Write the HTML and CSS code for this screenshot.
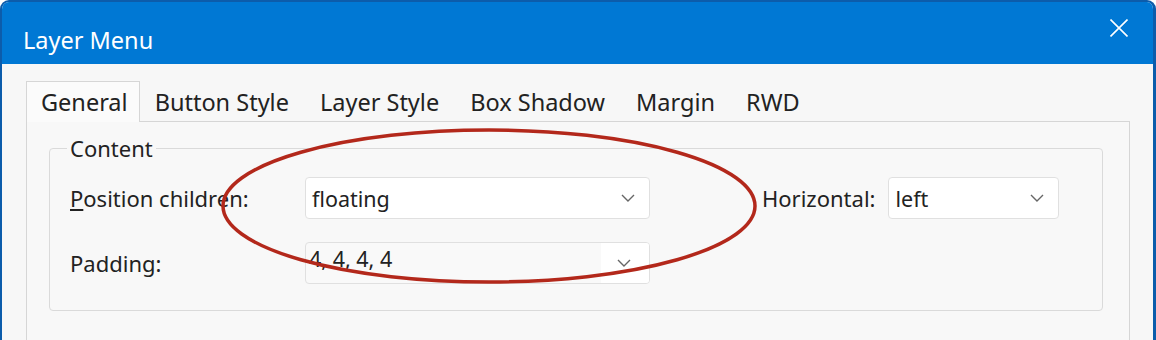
FILE: index.html
```html
<!DOCTYPE html>
<html lang="en">
<head>
    <meta charset="UTF-8">
    <meta name="viewport" content="width=device-width, initial-scale=1.0">
    <title>Layer Menu</title>
    <link rel="stylesheet" href="styles.css">
</head>
<body>
    <div class="window">
        <header class="titlebar">
            <span class="title">Layer Menu</span>
            <svg class="close" width="18" height="18" viewBox="0 0 18 18">
                <path d="M0.5 0.5 L17.5 17.5 M17.5 0.5 L0.5 17.5" stroke="#fff" stroke-width="1.6" fill="none"/>
            </svg>
        </header>
        <main class="content">
            <div class="tabs">
                <div class="tab active">General</div>
                <div class="tab">Button Style</div>
                <div class="tab">Layer Style</div>
                <div class="tab">Box Shadow</div>
                <div class="tab">Margin</div>
                <div class="tab">RWD</div>
            </div>
            <section class="panel">
                <fieldset class="group">
                    <legend>Content</legend>
                    <div class="row">
                        <label class="label"><u>P</u>osition children:</label>
                        <div class="combo wide">
                            <span>floating</span>
                            <svg class="chev" width="14" height="8" viewBox="0 0 14 8"><path d="M1 1 L7 7 L13 1" stroke="#666" stroke-width="1.4" fill="none"/></svg>
                        </div>
                        <label class="label side">Horizontal:</label>
                        <div class="combo narrow">
                            <span>left</span>
                            <svg class="chev" width="14" height="8" viewBox="0 0 14 8"><path d="M1 1 L7 7 L13 1" stroke="#666" stroke-width="1.4" fill="none"/></svg>
                        </div>
                    </div>
                    <div class="row">
                        <label class="label">Padding:</label>
                        <div class="combo wide editable">
                            <span>4, 4, 4, 4</span>
                            <div class="drop">
                                <svg class="chev" width="14" height="8" viewBox="0 0 14 8"><path d="M1 1 L7 7 L13 1" stroke="#666" stroke-width="1.4" fill="none"/></svg>
                            </div>
                        </div>
                    </div>
                </fieldset>
            </section>
        </main>
    </div>
    <svg class="mark" width="1156" height="340" viewBox="0 0 1156 340">
        <ellipse cx="489" cy="206" rx="266" ry="76" fill="none" stroke="#b3281b" stroke-width="3.5"/>
    </svg>
</body>
</html>
```

FILE: styles.css
```css
body {
    margin: 0;
    padding: 0;
    background-color: #fff;
    font-family: "Noto Sans", "Open Sans", sans-serif;
    color: #222;
    overflow: hidden;
    height: 340px;
}

.window {
    height: 338px;
    border: 2px solid #0c5cab;
    border-bottom: none;
    border-right-width: 3px;
    border-radius: 9px 9px 0 0;
    background-color: #f7f7f7;
    overflow: hidden;
}

.titlebar {
    height: 62px;
    background-color: #0078d4;
    display: flex;
    align-items: center;
    justify-content: space-between;
    padding: 0 25px 0 21px;
}

.title {
    color: #fff;
    font-size: 23.5px;
    margin-top: 14px;
}

.close {
    margin-bottom: 10px;
}

.content {
    padding: 17px 23px 0 24px;
}

.tabs {
    display: flex;
    height: 40px;
    border-bottom: 1px solid #d6d6d6;
}

.tab {
    padding: 0 15px 0 14px;
    font-size: 23.5px;
    line-height: 40px;
    border: 1px solid transparent;
    border-bottom: none;
    white-space: nowrap;
}

.tab.active {
    background-color: #fbfbfb;
    border-color: #d6d6d6;
    margin-bottom: -1px;
    height: 41px;
    box-sizing: border-box;
    padding-right: 11px;
}

.panel {
    border: 1px solid #d6d6d6;
    border-top: none;
    background-color: #f8f8f8;
    padding: 14px 26px 60px 22px;
}

.group {
    margin: 0;
    border: 1px solid #dadada;
    border-radius: 4px;
    padding: 17px 20px 26px 20px;
}

.group legend {
    font-size: 22px;
    line-height: 24px;
    padding: 0 3px;
    margin-left: -3px;
}

.row {
    display: flex;
    align-items: center;
    margin-bottom: 23px;
}

.row:last-child {
    margin-bottom: 0;
}

.label {
    width: 235px;
    font-size: 22px;
    white-space: nowrap;
}

.label.side {
    width: auto;
    margin-left: 112px;
    margin-right: 13px;
}

.combo {
    height: 42px;
    box-sizing: border-box;
    border: 1px solid #e0e0e0;
    border-radius: 4px;
    background-color: #fff;
    display: flex;
    align-items: center;
    justify-content: space-between;
    padding: 0 14px 0 6px;
    font-size: 21.5px;
}

.combo.wide {
    width: 345px;
}

.combo.narrow {
    width: 171px;
}

.combo.editable {
    background-color: #f9f9f9;
    padding: 0 0 0 3px;
    overflow: hidden;
}

.combo.editable span {
    margin-top: -10px;
}

.drop {
    width: 46px;
    height: 100%;
    background-color: #fff;
    display: flex;
    align-items: center;
    justify-content: center;
    padding-right: 2px;
}

.mark {
    position: absolute;
    left: 0;
    top: 0;
    pointer-events: none;
}
```
